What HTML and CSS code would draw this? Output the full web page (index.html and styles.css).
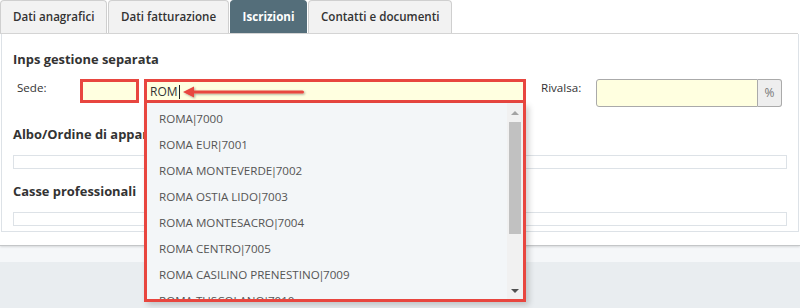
FILE: index.html
```html
<!DOCTYPE html>
<html lang="it">
<head>
  <meta charset="UTF-8">
  <title>Iscrizioni</title>
  <link rel="stylesheet" href="styles.css">
</head>
<body>
  <div class="page">
    <div class="tabs">
      <div class="tab">Dati anagrafici</div>
      <div class="tab">Dati fatturazione</div>
      <div class="tab active">Iscrizioni</div>
      <div class="tab">Contatti e documenti</div>
    </div>

    <div class="panel">
      <h3>Inps gestione separata</h3>
      <div class="row">
        <label class="lbl-sede">Sede:</label>
        <div class="box-small"></div>
        <div class="combo">
          <div class="combo-input">ROM<span class="caret"></span></div>
          <svg class="arrow" width="130" height="16" viewBox="0 0 130 16">
            <defs>
              <filter id="sh" x="-10%" y="-50%" width="120%" height="200%">
                <feDropShadow dx="1" dy="1" stdDeviation="0.8" flood-color="#000" flood-opacity="0.35"/>
              </filter>
            </defs>
            <g filter="url(#sh)" fill="#e8463f">
              <path d="M1 8 L12 2.5 L12 13.5 Z"/>
              <rect x="10" y="6.5" width="112" height="3" rx="1.5"/>
            </g>
          </svg>
          <div class="dropdown">
            <ul class="options">
              <li>ROMA<span class="sep">|</span>7000</li>
              <li>ROMA EUR<span class="sep">|</span>7001</li>
              <li>ROMA MONTEVERDE<span class="sep">|</span>7002</li>
              <li>ROMA OSTIA LIDO<span class="sep">|</span>7003</li>
              <li>ROMA MONTESACRO<span class="sep">|</span>7004</li>
              <li>ROMA CENTRO<span class="sep">|</span>7005</li>
              <li>ROMA CASILINO PRENESTINO<span class="sep">|</span>7009</li>
              <li>ROMA TUSCOLANO<span class="sep">|</span>7010</li>
            </ul>
            <div class="scrollbar">
              <span class="sb-up"></span>
              <span class="sb-thumb"></span>
              <span class="sb-down"></span>
            </div>
          </div>
        </div>
        <label class="lbl-rivalsa">Rivalsa:</label>
        <div class="input-group">
          <div class="field-yellow"></div>
          <span class="addon">%</span>
        </div>
      </div>

      <h3 class="mt-section">Albo/Ordine di appartenenza</h3>
      <div class="empty-table"></div>

      <h3 class="mt-section2">Casse professionali</h3>
      <div class="empty-table"></div>
    </div>
  </div>
  <div class="band"></div>
  <div class="footer"></div>
</body>
</html>
```

FILE: styles.css
```css
html, body {
  margin: 0;
  background: #e9edf0;
}

body {
  font-family: "Open Sans", "Noto Sans", sans-serif;
  color: #333;
  font-size: 12px;
}

.page {
  background: #fff;
  height: 245px;
  border-bottom: 1px solid #c4c6c8;
  box-shadow: 0 1px 2px rgba(0, 0, 0, 0.12);
  position: relative;
  z-index: 1;
}

.band {
  height: 16px;
  background: #f5f7f9;
}

.footer {
  height: 46px;
  background: #e9edf0;
}

/* tabs */
.tabs {
  display: flex;
  gap: 1px;
  height: 33px;
  border-bottom: 1px solid #d4d4d4;
  width: 798px;
}

.tab {
  background: #f2f2f2;
  border: 1px solid #cfcfcf;
  border-bottom: none;
  border-radius: 4px 4px 0 0;
  padding: 0 11.5px 0 12px;
  line-height: 32px;
  font-weight: 600;
  font-size: 11.6px;
  color: #333;
}

.tab.active {
  background: #546e7a;
  border-color: #546e7a;
  color: #fff;
  font-weight: 700;
}

/* panel */
.panel {
  margin-left: 1px;
  width: 774px;
  border: 1px solid #dde2e7;
  border-top: none;
  padding: 16px 11px 5px;
}

h3 {
  margin: 0;
  font-size: 12.9px;
  font-weight: 700;
  line-height: 18px;
  color: #333;
}

.mt-section { margin-top: 18px; }
.mt-section2 { margin-top: 13px; }

.empty-table {
  margin-top: 12px;
  height: 12px;
  border: 1px solid #dde2e7;
}

/* form row */
.row {
  display: flex;
  align-items: flex-start;
  margin-top: 11px;
  height: 28px;
}

.lbl-sede {
  width: 63px;
  padding-left: 4px;
  line-height: 18px;
  font-size: 11.6px;
}

.box-small {
  width: 53px;
  height: 18px;
  background: #ffffe0;
  border: 3px solid #e8463f;
}

.combo {
  position: relative;
  margin-left: 5px;
  width: 382px;
}

.combo-input {
  height: 18px;
  background: #ffffe0;
  border: 3px solid #e8463f;
  padding-left: 3px;
  line-height: 20px;
  font-size: 12px;
  color: #333;
}

.caret {
  display: inline-block;
  width: 1px;
  height: 14px;
  background: #222;
  vertical-align: -3px;
  margin-left: 1px;
}

.arrow {
  position: absolute;
  left: 38px;
  top: 5px;
}

.dropdown {
  position: absolute;
  left: 0;
  top: 24px;
  width: 376px;
  height: 196px;
  background: #f3f6f8;
  border: 3px solid #e8463f;
  border-top: none;
  overflow: hidden;
  box-shadow: 3px 3px 6px rgba(0, 0, 0, 0.18);
  z-index: 2;
}

.options {
  list-style: none;
  margin: 0;
  padding: 3px 0 0;
}

.options li {
  height: 26px;
  line-height: 26px;
  padding-left: 12px;
  color: #555;
  font-size: 11.6px;
}

.sep {
  margin: 0 -1.5px;
}

.scrollbar {
  position: absolute;
  right: 0;
  top: 0;
  bottom: 0;
  width: 16px;
  background: #f1f1f1;
}

.sb-up,
.sb-down {
  position: absolute;
  left: 4px;
  width: 0;
  height: 0;
  border-left: 4px solid transparent;
  border-right: 4px solid transparent;
}

.sb-up {
  top: 8px;
  border-bottom: 4px solid #a3a3a3;
}

.sb-down {
  bottom: 6px;
  border-top: 4px solid #505050;
}

.sb-thumb {
  position: absolute;
  left: 2px;
  right: 2px;
  top: 19px;
  height: 112px;
  background: #c1c1c1;
}

.lbl-rivalsa {
  margin-left: 15px;
  width: 55px;
  line-height: 18px;
  font-size: 11.6px;
}

.input-group {
  display: flex;
  width: 186px;
  height: 28px;
}

.field-yellow {
  flex: 1;
  background: #ffffe0;
  border: 1px solid #aaa;
  border-radius: 3px 0 0 3px;
}

.addon {
  width: 23px;
  background: #eee;
  border: 1px solid #aaa;
  border-left: none;
  border-radius: 0 3px 3px 0;
  text-align: center;
  line-height: 26px;
  color: #777;
  font-size: 12px;
}
```
